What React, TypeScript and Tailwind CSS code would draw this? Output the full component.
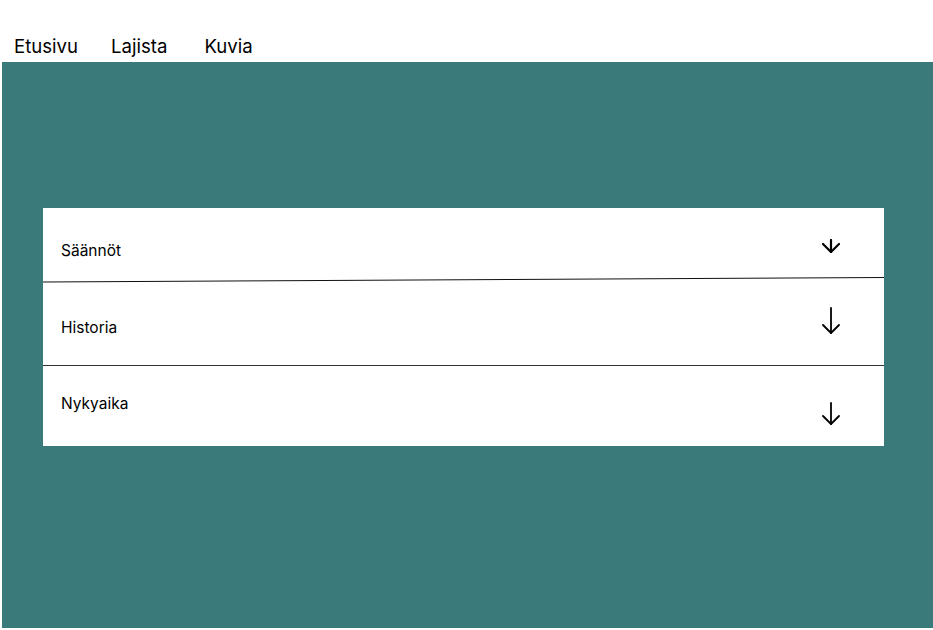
import React from "react";

function Arrow({ w, h, sw }: { w: number; h: number; sw: number }) {
  const cx = w / 2;
  const head = Math.min(w / 2 - 1, 8);
  return (
    <svg width={w} height={h} viewBox={`0 0 ${w} ${h}`} fill="none" stroke="#000" strokeWidth={sw} strokeLinecap="round" strokeLinejoin="round">
      <line x1={cx} y1={1} x2={cx} y2={h - 1} />
      <polyline points={`${cx - head},${h - 1 - head} ${cx},${h - 1} ${cx + head},${h - 1 - head}`} />
    </svg>
  );
}

export default function App() {
  return (
    <div className="w-[933px] h-[630px] bg-white overflow-hidden" style={{ fontFamily: "Inter, 'Noto Sans', sans-serif" }}>
      <nav className="h-[62px] flex items-start pt-[33px] pl-[14px] text-[18.6px] text-black leading-normal">
        <span>Etusivu</span>
        <span className="ml-[33px]">Lajista</span>
        <span className="ml-[37px]">Kuvia</span>
      </nav>
      <main className="ml-[2px] h-[566px] bg-[#3b7a7a] pt-[146px] pl-[41px] pr-[49px]">
        <div className="bg-white w-[841px] text-[15.5px] text-black leading-normal">
          <div className="h-[69px] flex items-start justify-between pl-[18px] pr-[44px]">
            <span className="mt-[31px]">Säännöt</span>
            <span className="mt-[31px]"><Arrow w={18} h={14} sw={2.2} /></span>
          </div>
          <svg width="841" height="6" viewBox="0 0 841 6" className="block">
            <line x1="0" y1="5" x2="841" y2="0.5" stroke="#111" strokeWidth="1" />
          </svg>
          <div className="h-[83px] flex items-start justify-between pl-[18px] pr-[44px] border-b border-[#333]">
            <span className="mt-[33px]">Historia</span>
            <span className="mt-[24px]"><Arrow w={18} h={27} sw={1.8} /></span>
          </div>
          <div className="h-[80px] flex items-start justify-between pl-[18px] pr-[44px]">
            <span className="mt-[26px]">Nykyaika</span>
            <span className="mt-[36px]"><Arrow w={18} h={23} sw={1.8} /></span>
          </div>
        </div>
      </main>
    </div>
  );
}
